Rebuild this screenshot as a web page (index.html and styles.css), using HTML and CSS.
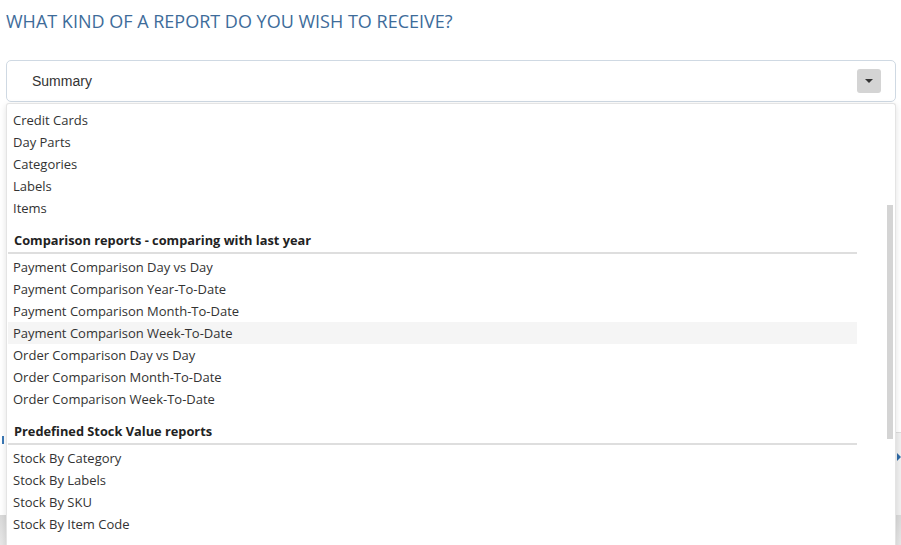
FILE: index.html
```html
<!DOCTYPE html>
<html>
<head>
<meta charset="utf-8">
<link rel="stylesheet" href="styles.css">
</head>
<body>
<div class="page">
  <h1 class="title">WHAT KIND OF A REPORT DO YOU WISH TO RECEIVE?</h1>
  <div class="field">
    <div class="select">
      <span class="select-value">Summary</span>
      <span class="caret-btn"><span class="caret"></span></span>
    </div>
    <div class="under">
      <div class="under-bar">
        <span class="under-mark"></span>
        <span class="under-right"><span class="tri"></span></span>
      </div>
      <div class="under-foot"></div>
    </div>
    <div class="dropdown">
      <div class="list">
        <div class="item">Credit Cards</div>
        <div class="item">Day Parts</div>
        <div class="item">Categories</div>
        <div class="item">Labels</div>
        <div class="item">Items</div>
        <div class="group">Comparison reports - comparing with last year</div>
        <div class="item">Payment Comparison Day vs Day</div>
        <div class="item">Payment Comparison Year-To-Date</div>
        <div class="item">Payment Comparison Month-To-Date</div>
        <div class="item hover">Payment Comparison Week-To-Date</div>
        <div class="item">Order Comparison Day vs Day</div>
        <div class="item">Order Comparison Month-To-Date</div>
        <div class="item">Order Comparison Week-To-Date</div>
        <div class="group">Predefined Stock Value reports</div>
        <div class="item">Stock By Category</div>
        <div class="item">Stock By Labels</div>
        <div class="item">Stock By SKU</div>
        <div class="item">Stock By Item Code</div>
      </div>
      <div class="scroll"><div class="thumb"></div></div>
    </div>
  </div>
</div>
</body>
</html>
```
FILE: styles.css
```css
* { box-sizing: border-box; }
html, body { margin: 0; padding: 0; background: #fff; overflow: hidden; }
body { width: 901px; height: 545px; }
.page { padding: 0 5px 0 6px; position: relative; height: 545px; }
.title {
  margin: 0;
  padding-top: 10px;
  height: 60px;
  font-family: "Open Sans", "Noto Sans", sans-serif;
  font-weight: 400;
  font-size: 18px;
  line-height: 22px;
  color: #3e6c9a;
}
.field { position: relative; }
.select {
  height: 42px;
  border: 1px solid #cfd9e3;
  border-radius: 5px;
  display: flex;
  align-items: center;
  justify-content: space-between;
  padding: 0 14px 0 25px;
  background: #fff;
}
.select-value {
  font-family: "Liberation Sans", Arial, sans-serif;
  font-size: 14px;
  color: #333;
}
.caret-btn {
  width: 24px;
  height: 24px;
  background: #d4d4d4;
  border-radius: 3px;
  display: flex;
  align-items: center;
  justify-content: center;
}
.caret {
  width: 0; height: 0;
  border-left: 4px solid transparent;
  border-right: 4px solid transparent;
  border-top: 4px solid #333;
}
.under { margin-top: 330px; margin-left: -6px; margin-right: -5px; }
.under-bar { height: 83px; display: flex; justify-content: space-between; }
.under-mark { width: 2px; height: 8px; margin: 4px 0 0 2px; background: #3a78b5; }
.under-right {
  width: 6px; height: 83px;
  background: #f0f0f0;
  border-top: 1px solid #dcdcdc;
  position: relative;
}
.tri {
  position: absolute; left: 2px; top: 20px;
  width: 0; height: 0;
  border-top: 4px solid transparent;
  border-bottom: 4px solid transparent;
  border-left: 4px solid #2f6aa6;
}
.under-foot { height: 40px; background: linear-gradient(#d9d9d9, #ececec); }
.dropdown {
  position: absolute;
  top: 43px;
  left: 0;
  right: 0;
  height: 460px;
  background: #fff;
  border: 1px solid #e4e4e4;
  border-bottom: none;
  border-radius: 3px 3px 0 0;
  box-shadow: 0 2px 6px rgba(0,0,0,0.12);
  display: flex;
  padding: 5px 0 0 1px;
}
.list { flex: 1; padding-right: 28px; }
.item, .group {
  font-family: "Open Sans", "Noto Sans", sans-serif;
  font-size: 13px;
  color: #333;
  height: 22px;
  line-height: 22px;
  padding-left: 5px;
}
.item.hover { background: #f5f5f5; }
.group {
  box-sizing: content-box;
  font-size: 12.8px;
  font-weight: 700;
  color: #222;
  height: 22px;
  padding-top: 10px;
  padding-bottom: 1px;
  padding-left: 6px;
  border-bottom: 2px solid #dedede;
  margin-bottom: 2px;
}
.scroll { width: 10px; padding: 96px 2px 0 2px; }
.thumb { width: 6px; height: 234px; background: #d4d4d4; }
```
